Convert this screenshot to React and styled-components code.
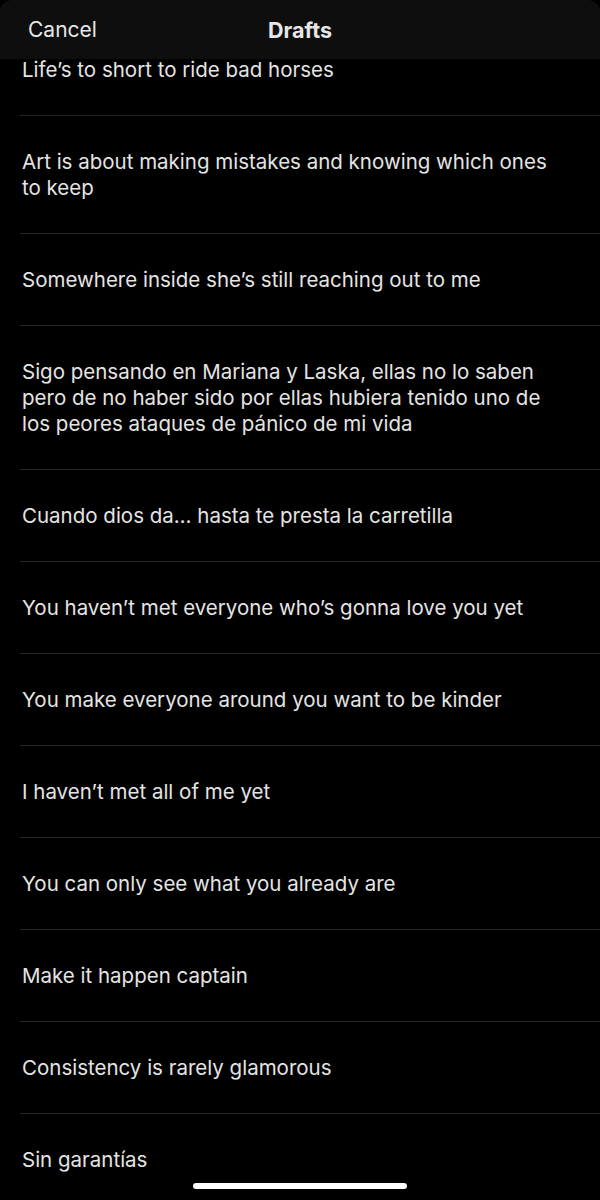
import React from 'react';
import styled, { createGlobalStyle } from 'styled-components';

const GlobalStyle = createGlobalStyle`
  html, body {
    margin: 0;
    padding: 0;
    background: #000;
  }
  * {
    box-sizing: border-box;
  }
`;

const Screen = styled.div`
  width: 600px;
  height: 1200px;
  background: #000;
  display: flex;
  flex-direction: column;
  overflow: hidden;
  position: relative;
  font-family: Inter, "Liberation Sans", Arial, sans-serif;
  color: #e7e7e7;
`;

const Header = styled.header`
  position: relative;
  z-index: 2;
  height: 59px;
  flex-shrink: 0;
  display: grid;
  grid-template-columns: 1fr auto 1fr;
  align-items: center;
  padding: 0 28px;
  background: #0e0e0e;
  border-radius: 12px 12px 0 0;
`;

const CancelButton = styled.button`
  justify-self: start;
  background: none;
  border: none;
  padding: 0;
  font: inherit;
  font-size: 21px;
  color: #e7e7e7;
  cursor: pointer;
`;

const Title = styled.h1`
  margin: 0;
  font-size: 21.5px;
  font-weight: 700;
  color: #e7e7e7;
`;

const List = styled.ul`
  list-style: none;
  margin: -35px 0 0;
  padding: 0;
  flex: 1;
`;

const DraftRow = styled.li`
  margin-left: 20px;
  padding: 33px 42px 32px 2px;
  border-bottom: 1px solid #262626;
  font-size: 20.5px;
  line-height: 26px;
  color: #e4e4e4;
`;

const HomeIndicator = styled.div`
  position: absolute;
  left: 193px;
  bottom: 11px;
  width: 214px;
  height: 6px;
  border-radius: 3px;
  background: #fff;
`;

const drafts = [
  'Life’s to short to ride bad horses',
  'Art is about making mistakes and knowing which ones to keep',
  'Somewhere inside she’s still reaching out to me',
  'Sigo pensando en Mariana y Laska, ellas no lo saben pero de no haber sido por ellas hubiera tenido uno de los peores ataques de pánico de mi vida',
  'Cuando dios da… hasta te presta la carretilla',
  'You haven’t met everyone who’s gonna love you yet',
  'You make everyone around you want to be kinder',
  'I haven’t met all of me yet',
  'You can only see what you already are',
  'Make it happen captain',
  'Consistency is rarely glamorous',
  'Sin garantías',
];

export default function App() {
  return (
    <>
      <GlobalStyle />
      <Screen>
        <Header>
          <CancelButton>Cancel</CancelButton>
          <Title>Drafts</Title>
          <span />
        </Header>
        <List>
          {drafts.map((text, i) => (
            <DraftRow key={i}>{text}</DraftRow>
          ))}
        </List>
        <HomeIndicator />
      </Screen>
    </>
  );
}
